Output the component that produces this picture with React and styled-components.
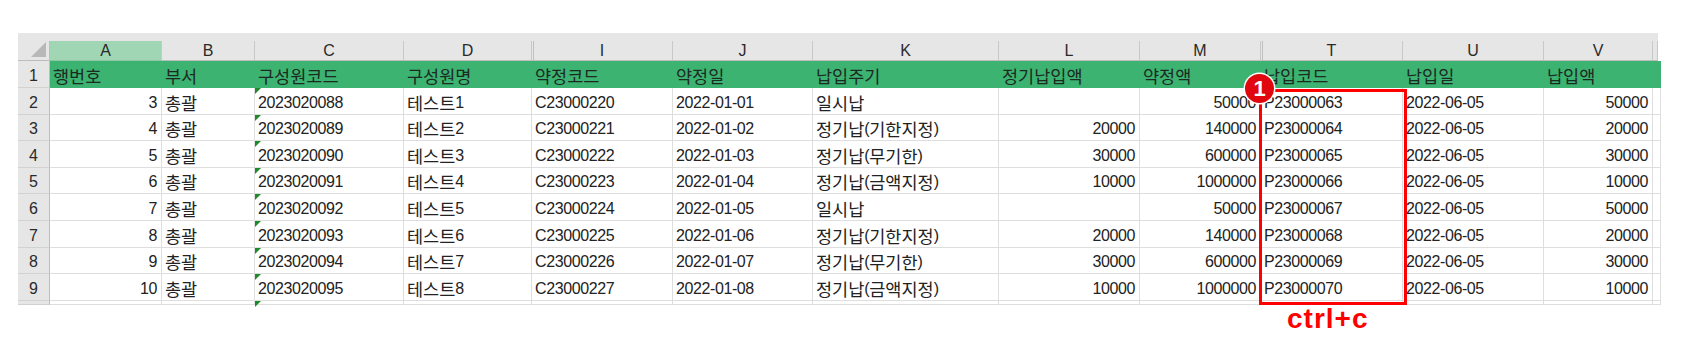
import React from 'react';
import styled, { createGlobalStyle, css } from 'styled-components';

const GlobalStyle = createGlobalStyle`
  body {
    margin: 0;
    background: #ffffff;
    font-family: "Liberation Sans", "Noto Sans CJK KR", sans-serif;
  }
`;

const COLS = [32, 112, 93, 149, 128, 141, 140, 186, 141, 121, 142, 141, 109, 5];
const ROW_HEIGHTS = [27, 27, 26, 27, 26, 27, 27, 26, 27];

const Page = styled.div`
  position: relative;
  height: 354px;
  padding: 33px 0 0 18px;
  box-sizing: border-box;
`;

const Sheet = styled.div`
  display: grid;
  grid-template-columns: ${COLS.map((w) => `${w}px`).join(' ')};
  grid-template-rows: 8px 20px ${ROW_HEIGHTS.map((h) => `${h}px`).join(' ')} 2px;
  width: 1640px;
  font-size: 16px;
  letter-spacing: -0.4px;
  color: #222222;
`;

const TopBand = styled.div`
  grid-column: 1 / -1;
  background: #e6e6e6;
`;

const Corner = styled.div`
  background: #e6e6e6;
  border-right: 1px solid #bdbdbd;
  border-bottom: 1px solid #bdbdbd;
  box-sizing: border-box;
  display: flex;
  align-items: flex-end;
  justify-content: flex-end;
  padding: 0 3px 3px 0;
`;

const ColHead = styled.div`
  background: ${(p) => (p.$selected ? '#a0d6b4' : '#e6e6e6')};
  border-right: 1px solid #c8c8c8;
  border-bottom: 1px solid ${(p) => (p.$selected ? '#8cc7a2' : '#bdbdbd')};
  box-sizing: border-box;
  display: flex;
  align-items: center;
  justify-content: center;
  font-size: 16px;
  letter-spacing: 0;
  color: #2a2a2a;
  ${(p) =>
    p.$hiddenBefore &&
    css`
      box-shadow: inset 1px 0 0 #e6e6e6, inset 2px 0 0 #c0c0c0;
    `}
`;

const RowHead = styled.div`
  background: #e6e6e6;
  border-right: 1px solid #bdbdbd;
  border-bottom: 1px solid #d2d2d2;
  box-sizing: border-box;
  display: flex;
  align-items: flex-end;
  justify-content: center;
  padding-bottom: 3px;
  line-height: 16px;
  letter-spacing: 0;
  color: #2a2a2a;
`;

const Cell = styled.div`
  position: relative;
  background: ${(p) => (p.$header ? '#3cb371' : '#ffffff')};
  border-right: 1px solid ${(p) => (p.$header ? '#3cb371' : '#dedede')};
  border-bottom: 1px solid ${(p) => (p.$header ? '#3cb371' : '#dedede')};
  box-sizing: border-box;
  display: flex;
  align-items: flex-end;
  justify-content: ${(p) => (p.$align === 'right' ? 'flex-end' : 'flex-start')};
  padding: 0 4px 3px 3px;
  line-height: 16px;
  white-space: nowrap;
  color: ${(p) => (p.$header ? '#1b2a22' : '#222222')};

  ${(p) =>
    p.$flag &&
    css`
      &::before {
        content: '';
        position: absolute;
        top: 0;
        left: 0;
        border-top: 6px solid #1f8a2c;
        border-right: 6px solid transparent;
      }
    `}
`;

const Kor = styled.span`
  font-family: "Noto Sans CJK KR", sans-serif;
  font-size: 17.5px;
  letter-spacing: 0;
`;

const RedBox = styled.div`
  position: absolute;
  left: 1259px;
  top: 89px;
  width: 148px;
  height: 216px;
  border: 3px solid #ff0000;
  box-sizing: border-box;
`;

const Badge = styled.div`
  position: absolute;
  left: 1245px;
  top: 74px;
  width: 29px;
  height: 29px;
  border-radius: 50%;
  background: #e0070f;
  box-shadow: 0 0 0 1.5px #ffffff;
  color: #ffffff;
  font-family: "Liberation Sans", sans-serif;
  font-weight: 700;
  font-size: 22px;
  line-height: 29px;
  text-align: center;
`;

const KeyLabel = styled.div`
  position: absolute;
  left: 1287px;
  top: 305px;
  color: #ff0000;
  font-family: "Liberation Sans", sans-serif;
  font-weight: 700;
  font-size: 28px;
  line-height: 28px;
  letter-spacing: 1px;
`;

const CornerMark = () => (
  <svg width="15" height="15" viewBox="0 0 15 15">
    <polygon points="15,0 15,15 0,15" fill="#b8b8b8" />
  </svg>
);

// Hangul runs get their own span so they can be sized like the sheet's Korean font
const renderText = (s) =>
  s.split(/([\uac00-\ud7a3]+)/).map((part, i) =>
    /[\uac00-\ud7a3]/.test(part) ? <Kor key={i}>{part}</Kor> : part
  );

const letters = ['A', 'B', 'C', 'D', 'I', 'J', 'K', 'L', 'M', 'T', 'U', 'V', ''];
const hiddenBefore = { I: true, T: true };
const aligns = ['right', 'left', 'left', 'left', 'left', 'left', 'left', 'right', 'right', 'left', 'left', 'right', 'left'];

const header = ['행번호', '부서', '구성원코드', '구성원명', '약정코드', '약정일', '납입주기', '정기납입액', '약정액', '납입코드', '납입일', '납입액', ''];

const data = [
  ['3', '총괄', '2023020088', '테스트1', 'C23000220', '2022-01-01', '일시납', '', '50000', 'P23000063', '2022-06-05', '50000'],
  ['4', '총괄', '2023020089', '테스트2', 'C23000221', '2022-01-02', '정기납(기한지정)', '20000', '140000', 'P23000064', '2022-06-05', '20000'],
  ['5', '총괄', '2023020090', '테스트3', 'C23000222', '2022-01-03', '정기납(무기한)', '30000', '600000', 'P23000065', '2022-06-05', '30000'],
  ['6', '총괄', '2023020091', '테스트4', 'C23000223', '2022-01-04', '정기납(금액지정)', '10000', '1000000', 'P23000066', '2022-06-05', '10000'],
  ['7', '총괄', '2023020092', '테스트5', 'C23000224', '2022-01-05', '일시납', '', '50000', 'P23000067', '2022-06-05', '50000'],
  ['8', '총괄', '2023020093', '테스트6', 'C23000225', '2022-01-06', '정기납(기한지정)', '20000', '140000', 'P23000068', '2022-06-05', '20000'],
  ['9', '총괄', '2023020094', '테스트7', 'C23000226', '2022-01-07', '정기납(무기한)', '30000', '600000', 'P23000069', '2022-06-05', '30000'],
  ['10', '총괄', '2023020095', '테스트8', 'C23000227', '2022-01-08', '정기납(금액지정)', '10000', '1000000', 'P23000070', '2022-06-05', '10000'],
];

const App = () => {
  return (
    <Page>
      <GlobalStyle />
      <Sheet>
        <TopBand />

        <Corner>
          <CornerMark />
        </Corner>
        {letters.map((l, i) => (
          <ColHead key={i} $selected={l === 'A'} $hiddenBefore={hiddenBefore[l]}>
            {l}
          </ColHead>
        ))}

        <RowHead>1</RowHead>
        {header.map((h, i) => (
          <Cell key={i} $header>
            {renderText(h)}
          </Cell>
        ))}

        {data.map((row, r) => (
          <React.Fragment key={r}>
            <RowHead>{r + 2}</RowHead>
            {[...row, ''].map((v, c) => (
              <Cell key={c} $align={aligns[c]} $flag={c === 2}>
                {renderText(v)}
              </Cell>
            ))}
          </React.Fragment>
        ))}

        <RowHead />
        {letters.map((_, c) => (
          <Cell key={c} $flag={c === 2} />
        ))}
      </Sheet>

      <RedBox />
      <Badge>1</Badge>
      <KeyLabel>ctrl+c</KeyLabel>
    </Page>
  );
};

export default App;
